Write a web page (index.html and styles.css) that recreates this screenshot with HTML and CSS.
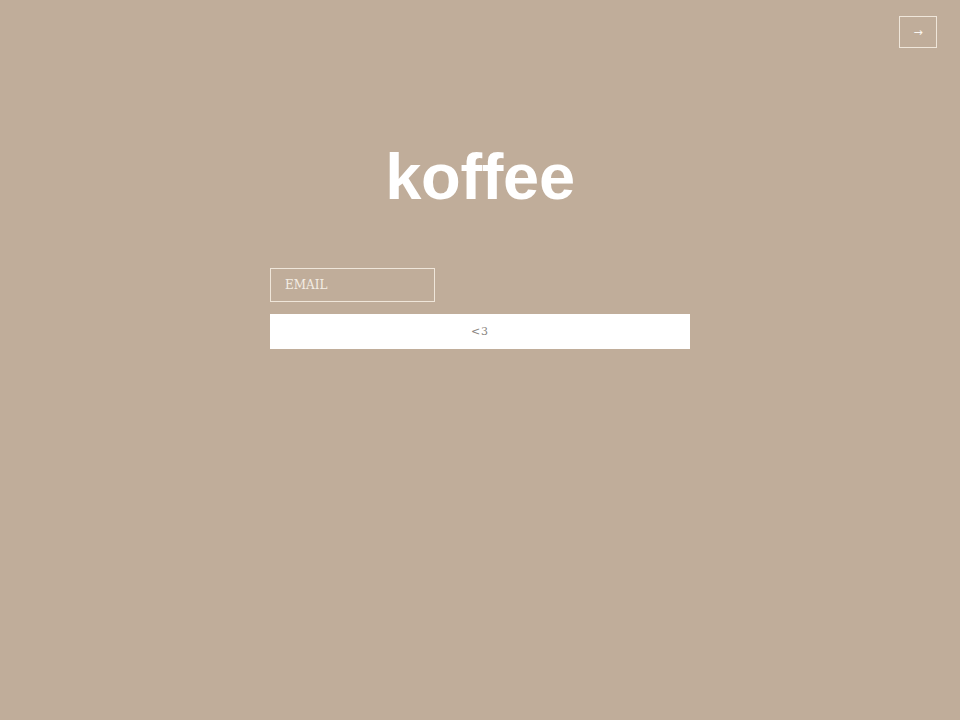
FILE: index.html
```html
<!DOCTYPE html>
<html>
<head>
<meta charset="utf-8">
<title>koffee</title>
<link rel="stylesheet" href="styles.css">
</head>
<body>
<div class="page">
  <header class="topbar">
    <button class="nav-btn" type="button">→</button>
  </header>
  <main class="main">
    <h1 class="title">koffee</h1>
    <form class="form">
      <input class="email" type="email" placeholder="EMAIL">
      <button class="submit" type="button">&lt;3</button>
    </form>
  </main>
</div>
</body>
</html>
```
FILE: styles.css
```css
html, body {
  margin: 0;
  padding: 0;
}
body {
  background: #c0ad9a;
  min-height: 720px;
  font-family: "Liberation Sans", Arial, sans-serif;
}
.page {
  display: flex;
  flex-direction: column;
}
.topbar {
  display: flex;
  justify-content: flex-end;
  padding: 16px 23px 0 0;
}
.nav-btn {
  width: 38px;
  height: 32px;
  border: 1px solid #efe6da;
  background: transparent;
  color: #fbf7f2;
  font-family: "DejaVu Sans", sans-serif;
  font-size: 11px;
  padding: 0;
  margin: 0;
}
.main {
  display: flex;
  flex-direction: column;
  align-items: center;
}
.title {
  margin: 96px 0 0 0;
  font-family: "Liberation Sans", Arial, sans-serif;
  font-weight: 700;
  font-size: 65px;
  line-height: 65px;
  color: #ffffff;
  letter-spacing: -0.3px;
}
.form {
  width: 420px;
  margin-top: 59px;
  display: flex;
  flex-direction: column;
  align-items: flex-start;
  gap: 12px;
}
.email {
  box-sizing: border-box;
  width: 165px;
  height: 34px;
  margin: 0;
  padding: 0 14px;
  border: 1px solid #efe6da;
  background: transparent;
  font-family: "DejaVu Serif", serif;
  font-size: 12px;
  color: #fbf7f2;
  outline: none;
}
.email::placeholder {
  color: #f4ede4;
  opacity: 1;
}
.submit {
  box-sizing: border-box;
  width: 420px;
  height: 35px;
  margin: 0;
  border: none;
  background: #ffffff;
  color: #8a8580;
  font-family: "DejaVu Serif", serif;
  font-size: 11px;
  letter-spacing: 1px;
  padding: 0;
}
```
